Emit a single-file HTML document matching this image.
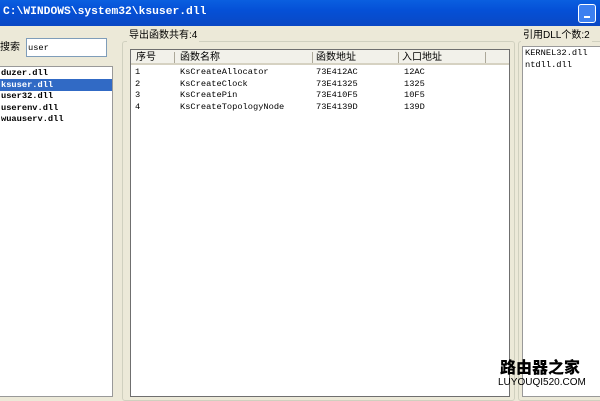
<!DOCTYPE html><html><head><style>
body{margin:0;width:600px;height:400px;background:#ece9d8;position:relative;overflow:hidden;font-family:"Liberation Mono","Noto Sans CJK SC",monospace;font-size:8.7px;color:#000}
div{position:absolute;box-sizing:border-box}
.t{white-space:nowrap;line-height:11.5px}
.w{background:#fff;border:1px solid #8a8878}
.cj{font-family:"Liberation Sans","Noto Sans CJK SC",sans-serif;font-size:10px}
</style></head><body>
<div style="left:0;top:0;width:600px;height:26px;background:linear-gradient(#0a5fe0,#0550d6 40%,#0a48c4);"></div>
<div class="t" style="left:3px;top:7px;color:#fff;font-weight:bold;font-size:11.3px;font-family:'Liberation Mono',monospace">C:\WINDOWS\system32\ksuser.dll</div>
<div style="left:578px;top:4px;width:18px;height:19px;border:1px solid #fff;border-radius:3px;background:#3d80f0"><div style="left:5px;top:11px;width:6px;height:2px;background:#fff"></div></div>
<div class="t cj" style="left:0;top:42px">搜索</div>
<div class="w" style="left:26px;top:38px;width:81px;height:19px;border-color:#7f9db9"><div class="t" style="left:1px;top:4px">user</div></div>
<div class="w" style="left:-1px;top:66px;width:114px;height:331px;border-color:#999"></div>
<div style="left:0;top:79px;width:112px;height:12px;background:#316ac5"></div>
<div class="t" style="left:1px;top:68px;font-weight:bold">duzer.dll<br><span style="color:#fff">ksuser.dll</span><br>user32.dll<br>userenv.dll<br>wuauserv.dll</div>
<div style="left:122px;top:41px;width:393px;height:360px;border:1px solid #d0d0bf;border-radius:3px"></div>
<div class="t cj" style="left:127px;top:30px;background:#ece9d8;padding:0 2px">导出函数共有:4</div>
<div class="w" style="left:130px;top:49px;width:380px;height:348px;border-color:#6f6f6f"></div>
<div style="left:131px;top:50px;width:378px;height:15px;background:#f2f1ea;border-bottom:2px solid #d6d2c2"></div>
<div style="left:174px;top:52px;width:1px;height:11px;background:#aca899"></div>
<div style="left:312px;top:52px;width:1px;height:11px;background:#aca899"></div>
<div style="left:398px;top:52px;width:1px;height:11px;background:#aca899"></div>
<div style="left:485px;top:52px;width:1px;height:11px;background:#aca899"></div>
<div class="t cj" style="left:136px;top:52px">序号</div>
<div class="t cj" style="left:180px;top:52px">函数名称</div>
<div class="t cj" style="left:316px;top:52px">函数地址</div>
<div class="t cj" style="left:402px;top:52px">入口地址</div>
<div class="t" style="left:135px;top:67px">1<br>2<br>3<br>4</div>
<div class="t" style="left:180px;top:67px">KsCreateAllocator<br>KsCreateClock<br>KsCreatePin<br>KsCreateTopologyNode</div>
<div class="t" style="left:316px;top:67px">73E412AC<br>73E41325<br>73E410F5<br>73E4139D</div>
<div class="t" style="left:404px;top:67px">12AC<br>1325<br>10F5<br>139D</div>
<div style="left:518px;top:41px;width:90px;height:360px;border:1px solid #d0d0bf;border-radius:3px"></div>
<div class="t cj" style="left:521px;top:30px;background:#ece9d8;padding:0 2px">引用DLL个数:2</div>
<div class="w" style="left:522px;top:46px;width:80px;height:351px;border-color:#999"></div>
<div class="t" style="left:525px;top:48px">KERNEL32.dll<br>ntdll.dll</div>
<div class="t" style="left:500px;top:357px;font-family:'Noto Sans CJK SC',sans-serif;font-weight:900;font-size:16px;line-height:18px">路由器之家</div>
<div class="t" style="left:498px;top:377px;font-family:'Liberation Sans',sans-serif;font-size:10px">LUYOUQI520.COM</div>
</body></html>
